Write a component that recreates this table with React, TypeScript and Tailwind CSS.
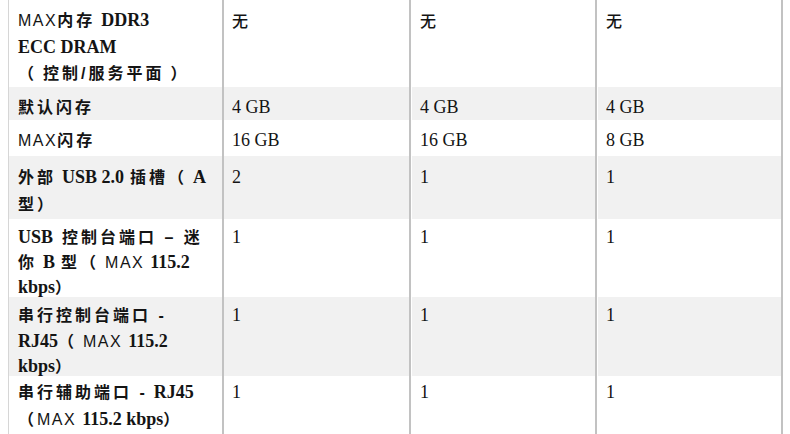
import React from "react";

const Zh = ({ children }: { children: React.ReactNode }) => (
  <span className="font-['Liberation_Sans','Noto_Sans_CJK_SC',sans-serif] text-[16px] font-semibold tracking-[3px]">
    {children}
  </span>
);

const B = ({ children }: { children: React.ReactNode }) => (
  <span className="font-['Liberation_Serif',serif] text-[18px] font-bold">{children}</span>
);

const M = ({ children }: { children: React.ReactNode }) => (
  <span className="font-['Liberation_Sans',sans-serif] text-[16px] tracking-[1.5px]">{children}</span>
);

// gap used where the source has a space between runs
const Sp = ({ w = "w-[6px]" }: { w?: string }) => <span className={`inline-block ${w}`} />;

type Row = {
  h: string;
  pad: string;
  lh: string;
  gray: boolean;
  label: React.ReactNode[];
  values: string[];
};

const rows: Row[] = [
  {
    h: "h-[87px]",
    pad: "pt-[7px]",
    lh: "leading-[26px]",
    gray: false,
    label: [
      <>
        <M>MAX</M>
        <Zh>内存</Zh>
        <Sp />
        <B>DDR3</B>
      </>,
      <B>ECC DRAM</B>,
      <>
        <Zh>（</Zh>
        <Sp />
        <Zh>控制/服务平面</Zh>
        <Sp />
        <Zh>）</Zh>
      </>,
    ],
    values: ["无", "无", "无"],
  },
  {
    h: "h-[33px]",
    pad: "pt-[7px]",
    lh: "leading-[26px]",
    gray: true,
    label: [<Zh>默认闪存</Zh>],
    values: ["4 GB", "4 GB", "4 GB"],
  },
  {
    h: "h-[36px]",
    pad: "pt-[7px]",
    lh: "leading-[26px]",
    gray: false,
    label: [
      <>
        <M>MAX</M>
        <Zh>闪存</Zh>
      </>,
    ],
    values: ["16 GB", "16 GB", "8 GB"],
  },
  {
    h: "h-[63px]",
    pad: "pt-[8px]",
    lh: "leading-[26px]",
    gray: true,
    label: [
      <>
        <Zh>外部</Zh>
        <Sp />
        <B>USB 2.0</B>
        <Sp />
        <Zh>插槽（</Zh>
        <Sp />
        <B>A</B>
      </>,
      <Zh>型）</Zh>,
    ],
    values: ["2", "1", "1"],
  },
  {
    h: "h-[78px]",
    pad: "pt-[6px]",
    lh: "leading-[24px]",
    gray: false,
    label: [
      <>
        <B>USB</B>
        <Sp w="w-[9px]" />
        <Zh>控制台端口 – 迷</Zh>
      </>,
      <>
        <Zh>你</Zh>
        <Sp />
        <B>B</B>
        <Sp />
        <Zh>型（</Zh>
        <Sp />
        <M>MAX</M>
        <Sp />
        <B>115.2</B>
      </>,
      <>
        <B>kbps</B>
        <Zh>）</Zh>
      </>,
    ],
    values: ["1", "1", "1"],
  },
  {
    h: "h-[79px]",
    pad: "pt-[6px]",
    lh: "leading-[24.5px]",
    gray: true,
    label: [
      <Zh>串行控制台端口 -</Zh>,
      <>
        <B>RJ45</B>
        <Zh>（</Zh>
        <Sp />
        <M>MAX</M>
        <Sp />
        <B>115.2</B>
      </>,
      <>
        <B>kbps</B>
        <Zh>）</Zh>
      </>,
    ],
    values: ["1", "1", "1"],
  },
  {
    h: "h-[70px]",
    pad: "pt-[3px]",
    lh: "leading-[26px]",
    gray: false,
    label: [
      <>
        <Zh>串行辅助端口 -</Zh>
        <Sp />
        <B>RJ45</B>
      </>,
      <>
        <Zh>（</Zh>
        <M>MAX</M>
        <Sp />
        <B>115.2 kbps</B>
        <Zh>）</Zh>
      </>,
    ],
    values: ["1", "1", "1"],
  },
];

const Value = ({ v }: { v: string }) =>
  v === "无" ? (
    <span className="font-['Noto_Sans_CJK_SC',sans-serif] text-[16px] font-medium">{v}</span>
  ) : (
    <span className="font-['Liberation_Serif',serif] text-[18px]">{v}</span>
  );

export default function App() {
  const widths = ["w-[187px]", "w-[186px]", "w-[186px]"];
  return (
    <div className="w-[790px] h-[434px] overflow-hidden bg-white text-[#141414]">
      <div className="ml-[8px] w-[775px] border-l border-[#d6d6d6]">
        {rows.map((r, i) => (
          <div key={i} className={`flex ${r.h} ${r.lh}`}>
            <div
              className={`w-[215px] shrink-0 border-r-2 border-[#c2c2c2] pl-[9px] ${r.pad} ${
                r.gray ? "bg-[#f1f1f1]" : "bg-white"
              }`}
            >
              {r.label.map((line, j) => (
                <div key={j} className="whitespace-nowrap">
                  {line}
                </div>
              ))}
            </div>
            {r.values.map((v, j) => (
              <div
                key={j}
                className={`${widths[j]} shrink-0 border-r-2 border-[#c2c2c2] pl-[8px] ${r.pad} ${
                  r.gray ? "bg-[#f1f1f1]" : "bg-white"
                } ${j > 0 ? "border-l border-l-white" : ""}`}
              >
                <Value v={v} />
              </div>
            ))}
          </div>
        ))}
      </div>
    </div>
  );
}
